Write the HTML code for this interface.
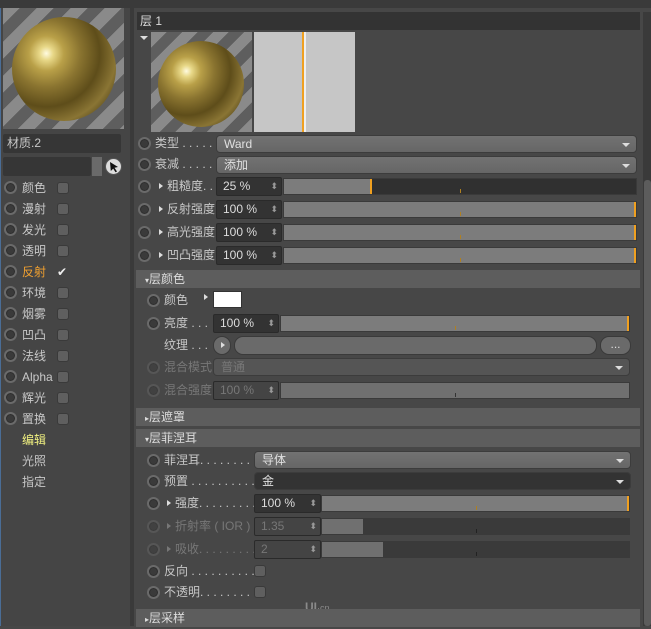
<!DOCTYPE html><html><head><meta charset="utf-8"><style>
*{margin:0;padding:0;box-sizing:border-box}
body{width:651px;height:626px;overflow:hidden;background:#474747;font-family:"Liberation Sans","Noto Sans CJK SC",sans-serif;font-size:12px;color:#c8c8c8;position:relative}
.a{position:absolute}
.rad{position:absolute;width:13px;height:13px;border-radius:50%;background:#3a3a3a;border:2px solid #6a6a6a;box-shadow:inset 0 0 0 1px #2e2e2e}
.rad.d{opacity:.45}
.lbl{position:absolute;white-space:nowrap;line-height:14px}
.chk{position:absolute;width:12px;height:12px;border-radius:3px;background:#5f5f5f;border:1px solid #3a3a3a}
.dd{position:absolute;height:18px;border-radius:4px;background:linear-gradient(#727272,#666);border:1px solid #3c3c3c;padding-left:7px;line-height:16px;color:#e0e0e0}
.dd:after{content:"";position:absolute;right:6px;top:7px;border:4px solid transparent;border-top:4px solid #ddd;border-bottom:0;width:0}
.fld{position:absolute;height:19px;background:#333;border:1px solid #2a2a2a;border-radius:2px;padding-left:6px;line-height:17px;color:#ddd}
.fld:after{content:"⬍";position:absolute;right:3px;top:0;font-size:9px;color:#999}
.sl{position:absolute;height:17px;background:#7c7c7c;border:1px solid #3a3a3a}
.sl .t{position:absolute;left:50%;bottom:1px;width:1px;height:4px;background:#b08020}
.sl .e{position:absolute;right:0;top:0;width:2px;height:100%;background:#f0a020}
.hd{position:absolute;left:136px;width:504px;height:18px;background:#5d5d5d;line-height:18px;padding-left:9px;color:#ddd}
.tri{position:absolute;width:0;height:0;border:3px solid transparent;border-left:4px solid #ddd}
.dis{color:#777}
.sph{border-radius:50%;background:radial-gradient(circle at 33% 35%,#fffbe0 0,#e8d888 7%,#b9a048 18%,#8a7430 35%,#5e4d1a 55%,#8a7534 72%,#3a2f0e 92%,#221a06 100%)}
</style></head><body>
<div class="a" style="left:0;top:0;width:651px;height:8px;background:#3a3a3a"></div>
<div class="a" style="left:0;top:8px;width:131px;height:618px;background:#454545;border-left:1px solid #4a6d96"></div>
<div class="a" style="left:130px;top:8px;width:4px;height:618px;background:#3a3a3a"></div>
<div class="a" style="left:3px;top:8px;width:121px;height:121px;overflow:hidden;background:repeating-linear-gradient(135deg,#8a8a8a 0 12px,#5e5e5e 12px 24px)">
<div class="a sph" style="left:9px;top:9px;width:104px;height:104px"></div></div>
<div class="a" style="left:3px;top:134px;width:118px;height:19px;background:#363636;border-radius:2px;padding-left:4px;line-height:19px">材质.2</div>
<div class="a" style="left:3px;top:157px;width:88px;height:19px;background:#363636;border-radius:2px"></div>
<div class="a" style="left:92px;top:157px;width:10px;height:19px;background:#6a6a6a"></div>
<div class="a" style="left:105px;top:158px;width:17px;height:17px;border-radius:50%;background:#ddd;border:1px solid #555"></div>
<svg class="a" style="left:105px;top:158px" width="17" height="17"><path d="M5 4 L13 9 L9.5 9.8 L12 13.5 L10.5 14.3 L8.2 10.6 L5.8 13 Z" fill="#111"/></svg>
<div id="left"></div>
<div class="a" style="left:137px;top:12px;width:503px;height:18px;background:#333;line-height:18px;padding-left:3px;color:#ddd">层 1</div>
<div class="a" style="left:140px;top:36px;border:4px solid transparent;border-top:4px solid #ddd;border-bottom:0"></div>
<div class="a" style="left:151px;top:32px;width:101px;height:100px;overflow:hidden;background:repeating-linear-gradient(135deg,#8a8a8a 0 11px,#5e5e5e 11px 22px)">
<div class="a sph" style="left:7px;top:9px;width:86px;height:86px"></div></div>
<div class="a" style="left:254px;top:32px;width:101px;height:100px;background:#c6c6c6"></div>
<div class="a" style="left:302px;top:32px;width:2px;height:100px;background:#f0a020"></div>
<div class="a" style="left:304px;top:32px;width:2px;height:100px;background:#eee"></div>
<div class="a" style="left:643px;top:12px;width:8px;height:614px;background:#3a3a3a"></div>
<div class="a" style="left:644px;top:180px;width:7px;height:446px;background:#5c5c5c;border-radius:3px"></div>
<div id="right"></div>
<div class="hd" style="top:270px"><span style="font-size:8px">▾</span>层颜色</div>
<div class="hd" style="top:408px"><span style="font-size:8px">▸</span>层遮罩</div>
<div class="hd" style="top:429px"><span style="font-size:8px">▾</span>层菲涅耳</div>
<div class="hd" style="top:609px"><span style="font-size:8px">▸</span>层采样</div>
<div class="a" style="left:640px;top:270px;width:3px;height:356px;background:#474747"></div>
<script>
var L=document.getElementById('left'),h='';
var names=['颜色','漫射','发光','透明','反射','环境','烟雾','凹凸','法线','Alpha','辉光','置换'];
names.forEach(function(n,i){var y=181+i*21;h+='<div class="rad" style="left:4px;top:'+y+'px"></div><div class="lbl" style="left:22px;top:'+(y)+'px;'+(i==4?'color:#f0a030':'')+'">'+n+'</div>'+(i==4?'<div class="lbl" style="left:57px;top:'+y+'px;color:#eee">✔</div>':'<div class="chk" style="left:57px;top:'+(y+1)+'px"></div>');});
h+='<div class="lbl" style="left:22px;top:433px;color:#f0f080">编辑</div><div class="lbl" style="left:22px;top:454px">光照</div><div class="lbl" style="left:22px;top:475px">指定</div>';
L.innerHTML=h;
var R=document.getElementById('right');h='';
function rad(x,y,d){return '<div class="rad'+(d?' d':'')+'" style="left:'+x+'px;top:'+(y-6)+'px"></div>';}
h+=rad(138,143)+'<div class="lbl" style="left:155px;top:136px">类型 . . . . .</div><div class="dd" style="left:216px;top:135px;width:421px">Ward</div>';
h+=rad(138,164)+'<div class="lbl" style="left:155px;top:157px">衰减 . . . . .</div><div class="dd" style="left:216px;top:156px;width:421px">添加</div>';
[['粗糙度. .','25 %',25],['反射强度','100 %',100],['高光强度','100 %',100],['凹凸强度','100 %',100]].forEach(function(r,i){var y=186+i*23;
h+=rad(138,y)+'<div class="tri" style="left:159px;top:'+(y-3)+'px"></div><div class="lbl" style="left:167px;top:'+(y-7)+'px">'+r[0]+'</div><div class="fld" style="left:216px;top:'+(y-9)+'px;width:66px">'+r[1]+'</div>';
if(r[2]<100)h+='<div class="sl" style="left:283px;top:'+(y-8)+'px;width:354px;background:#303030"><div style="position:absolute;left:0;top:0;height:100%;width:88px;background:#7c7c7c;border-right:2px solid #f0a020"></div><div class="t"></div></div>';
else h+='<div class="sl" style="left:283px;top:'+(y-8)+'px;width:354px"><div class="t"></div><div class="e"></div></div>';});
h+=rad(147,300)+'<div class="lbl" style="left:164px;top:293px">颜色</div><div class="tri" style="left:204px;top:294px"></div><div class="a" style="left:213px;top:291px;width:29px;height:17px;background:#fff;border:1px solid #333"></div>';
h+=rad(147,323)+'<div class="lbl" style="left:164px;top:316px">亮度 . . .</div><div class="fld" style="left:213px;top:314px;width:66px">100 %</div><div class="sl" style="left:280px;top:315px;width:350px"><div class="t"></div><div class="e"></div></div>';
h+='<div class="lbl" style="left:164px;top:338px">纹理 . . .</div><div class="a" style="left:213px;top:336px;width:18px;height:19px;border-radius:9px;background:#6a6a6a;border:1px solid #3a3a3a"></div><div class="tri" style="left:221px;top:342px"></div><div class="a" style="left:234px;top:336px;width:363px;height:19px;border-radius:9px;background:#6a6a6a;border:1px solid #3a3a3a"></div><div class="a" style="left:600px;top:336px;width:31px;height:19px;border-radius:9px;background:#6a6a6a;border:1px solid #3a3a3a;text-align:center;line-height:14px;color:#ddd">...</div>';
h+=rad(147,367,1)+'<div class="lbl dis" style="left:164px;top:360px">混合模式</div><div class="dd" style="left:213px;top:358px;width:417px;background:#555;color:#777">普通</div>';
h+=rad(147,390,1)+'<div class="lbl dis" style="left:164px;top:383px">混合强度</div><div class="fld" style="left:213px;top:381px;width:66px;background:#444;color:#777">100 %</div><div class="sl" style="left:280px;top:382px;width:350px;background:#707070"><div class="t" style="background:#333"></div></div>';
h+=rad(147,460)+'<div class="lbl" style="left:164px;top:453px">菲涅耳. . . . . . . . .</div><div class="dd" style="left:254px;top:451px;width:377px">导体</div>';
h+=rad(147,481)+'<div class="lbl" style="left:164px;top:474px">预置 . . . . . . . . . .</div><div class="dd" style="left:254px;top:472px;width:377px;background:#333">金</div>';
h+=rad(147,503)+'<div class="tri" style="left:167px;top:500px"></div><div class="lbl" style="left:175px;top:496px">强度. . . . . . . . .</div><div class="fld" style="left:254px;top:494px;width:67px">100 %</div><div class="sl" style="left:321px;top:495px;width:309px"><div class="t"></div><div class="e"></div></div>';
h+=rad(147,526,1)+'<div class="tri" style="left:167px;top:523px;border-left-color:#777"></div><div class="lbl dis" style="left:175px;top:519px">折射率 ( IOR )</div><div class="fld" style="left:254px;top:517px;width:67px;background:#444;color:#777">1.35</div><div class="sl" style="left:321px;top:518px;width:309px;background:#3a3a3a"><div style="position:absolute;left:0;top:0;height:100%;width:41px;background:#707070"></div><div class="t" style="background:#222"></div></div>';
h+=rad(147,549,1)+'<div class="tri" style="left:167px;top:546px;border-left-color:#777"></div><div class="lbl dis" style="left:175px;top:542px">吸收. . . . . . . . .</div><div class="fld" style="left:254px;top:540px;width:67px;background:#444;color:#777">2</div><div class="sl" style="left:321px;top:541px;width:309px;background:#3a3a3a"><div style="position:absolute;left:0;top:0;height:100%;width:61px;background:#707070"></div><div class="t" style="background:#222"></div></div>';
h+=rad(147,571)+'<div class="lbl" style="left:164px;top:564px">反向 . . . . . . . . . .</div><div class="chk" style="left:254px;top:565px"></div>';
h+=rad(147,592)+'<div class="lbl" style="left:164px;top:585px">不透明. . . . . . . . .</div><div class="chk" style="left:254px;top:586px"></div>';
h+='<div class="lbl" style="left:305px;top:600px;color:#8a8a8a;font-weight:bold">UI<span style="font-size:9px;font-weight:normal">·cn</span></div>';
R.innerHTML=h;
</script>
</body></html>
